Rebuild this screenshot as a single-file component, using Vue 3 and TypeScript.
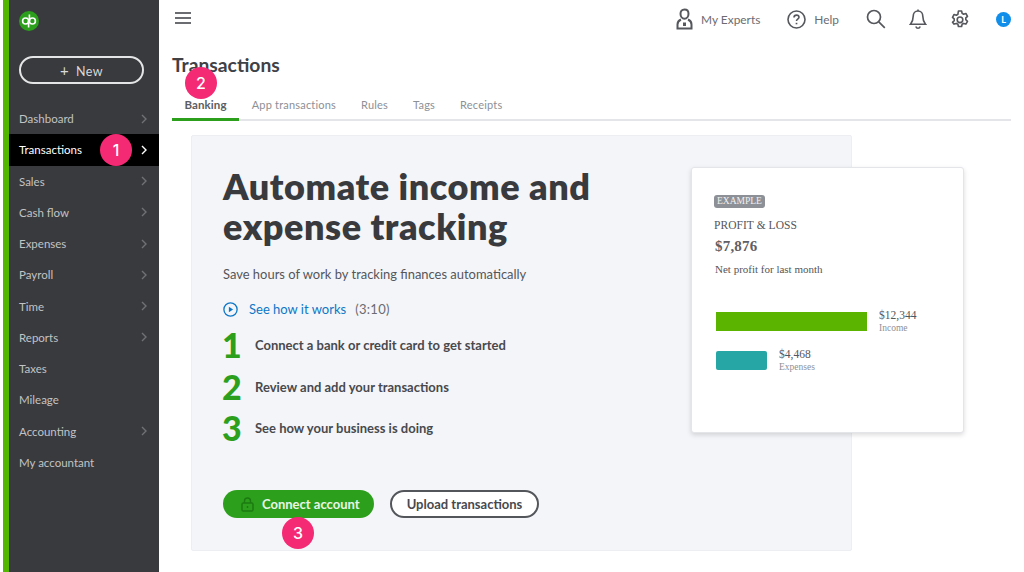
<script setup lang="ts">
const navItems = [
  { label: 'Dashboard', arrow: true },
  { label: 'Transactions', arrow: true, active: true },
  { label: 'Sales', arrow: true },
  { label: 'Cash flow', arrow: true },
  { label: 'Expenses', arrow: true },
  { label: 'Payroll', arrow: true },
  { label: 'Time', arrow: true },
  { label: 'Reports', arrow: true },
  { label: 'Taxes', arrow: false },
  { label: 'Mileage', arrow: false },
  { label: 'Accounting', arrow: true },
  { label: 'My accountant', arrow: false },
]

const tabs = ['Banking', 'App transactions', 'Rules', 'Tags', 'Receipts']

const steps = [
  { n: 1, text: 'Connect a bank or credit card to get started' },
  { n: 2, text: 'Review and add your transactions' },
  { n: 3, text: 'See how your business is doing' },
]
</script>

<template>
  <div class="page">
    <aside class="sidebar">
      <div class="logo">
        <svg width="20" height="20" viewBox="0 0 20 20">
          <circle cx="10" cy="10" r="10" fill="#2ca01c" />
          <circle cx="6.600" cy="10" r="3" fill="none" stroke="#fff" stroke-width="1.600" />
          <circle cx="13.400" cy="10" r="3" fill="none" stroke="#fff" stroke-width="1.600" />
          <path d="M9.600 10v6.500M10.400 10V3.500" stroke="#fff" stroke-width="1.600" fill="none" />
        </svg>
      </div>
      <button class="new-btn"><span class="plus">+</span>New</button>
      <nav class="nav">
        <div v-for="item in navItems" :key="item.label" class="nav-row" :class="{ active: item.active }">
          <span>{{ item.label }}</span>
          <svg v-if="item.arrow" class="chev" width="6" height="10" viewBox="0 0 6 10">
            <path d="M1 1l4 4-4 4" fill="none" stroke="currentColor" stroke-width="1.400" />
          </svg>
          <span v-if="item.active" class="badge badge-nav">1</span>
        </div>
      </nav>
    </aside>

    <main class="main">
      <header class="topbar">
        <div class="burger"><i></i><i></i><i></i></div>
        <div class="top-actions">
          <div class="top-link">
            <svg width="17" height="22" viewBox="0 0 17 22" fill="none" stroke="#55575c" stroke-width="2">
              <path d="M8.500 1.500c-2.600 0-4 1.800-4 4.200 0 2.600 1.600 5 4 5s4-2.400 4-5c0-2.400-1.400-4.200-4-4.200z" />
              <path d="M5 11.500c-2.300 1-3.500 2.500-3.500 5v4h14v-4c0-2.500-1.200-4-3.500-5" />
              <path d="M8.500 14.500v3.500" stroke-width="3" />
            </svg>
            <span>My Experts</span>
          </div>
          <div class="top-link help">
            <svg width="19" height="19" viewBox="0 0 19 19" fill="none" stroke="#55575c" stroke-width="1.600">
              <circle cx="9.500" cy="9.500" r="8.500" />
              <path d="M7 7.500c0-1.500 1.100-2.400 2.500-2.400s2.500.9 2.500 2.200c0 1.900-2.500 1.900-2.500 3.700" />
              <path d="M9.500 12.800v1.500" stroke-width="1.700" />
            </svg>
            <span>Help</span>
          </div>
          <svg class="ic-search" width="20" height="20" viewBox="0 0 20 20" fill="none" stroke="#55575c" stroke-width="1.700">
            <circle cx="8" cy="8" r="6.500" />
            <path d="M12.800 12.800l6 6" />
          </svg>
          <svg class="ic-bell" width="18" height="20" viewBox="0 0 18 20" fill="none" stroke="#55575c" stroke-width="1.600">
            <path d="M9 2c-3 0-4.800 2.200-4.800 5.200 0 3.800-.8 5.600-2.700 8h15c-1.900-2.400-2.700-4.200-2.700-8C13.800 4.200 12 2 9 2z" />
            <path d="M9 .5V2M6.800 17.500c.4 1.100 1.200 1.700 2.200 1.700s1.800-.6 2.200-1.700" />
          </svg>
          <svg class="ic-gear" width="18" height="18" viewBox="0 0 18 18" fill="none" stroke="#55575c" stroke-width="1.600">
            <path d="M7.400 1h3.200l.5 2.300 1.500.9 2.300-.7 1.600 2.800-1.700 1.600v1.800l1.700 1.600-1.600 2.800-2.300-.7-1.500.9-.5 2.200H7.400l-.5-2.200-1.500-.9-2.300.7L1.500 12.300l1.700-1.600V8.900L1.500 7.300l1.600-2.800 2.300.7 1.500-.9z" stroke-linejoin="round" />
            <circle cx="9" cy="9.800" r="2.800" />
          </svg>
          <span class="avatar">L</span>
        </div>
      </header>

      <h1 class="title">Transactions</h1>

      <div class="tabs">
        <div v-for="(tab, i) in tabs" :key="tab" class="tab" :class="{ on: i === 0 }">
          {{ tab }}
          <span v-if="i === 0" class="badge badge-tab">2</span>
        </div>
      </div>

      <section class="hero">
        <div class="hero-left">
          <h2 class="headline">Automate income and<br />expense tracking</h2>
          <p class="sub">Save hours of work by tracking finances automatically</p>
          <div class="video">
            <svg width="15" height="15" viewBox="0 0 15 15">
              <circle cx="7.500" cy="7.500" r="6.600" fill="none" stroke="#0d77c7" stroke-width="1.300" />
              <path d="M5.900 4.800l4.200 2.700-4.200 2.700z" fill="#0d77c7" />
            </svg>
            <a class="video-link">See how it works</a>
            <span class="video-time">(3:10)</span>
          </div>
          <ol class="steps">
            <li v-for="s in steps" :key="s.n" class="step">
              <span class="step-n">{{ s.n }}</span>
              <span class="step-text">{{ s.text }}</span>
            </li>
          </ol>
          <div class="actions">
            <button class="btn-green">
              <svg width="13" height="15" viewBox="0 0 13 15" fill="none" stroke="#1b7a10" stroke-width="1.500">
                <rect x="1" y="6" width="11" height="8" rx="1.200" />
                <path d="M3.500 6V4a3 3 0 016 0v2" />
                <path d="M6.500 9v2" />
              </svg>
              Connect account
              <span class="badge badge-btn">3</span>
            </button>
            <button class="btn-outline">Upload transactions</button>
          </div>
        </div>

        <div class="card">
          <span class="example">EXAMPLE</span>
          <div class="pl">PROFIT &amp; LOSS</div>
          <div class="amount">$7,876</div>
          <div class="net">Net profit for last month</div>
          <div class="bar-row first">
            <div class="bar income"></div>
            <div class="bar-label"><b>$12,344</b><small>Income</small></div>
          </div>
          <div class="bar-row">
            <div class="bar expenses"></div>
            <div class="bar-label"><b>$4,468</b><small>Expenses</small></div>
          </div>
        </div>
      </section>
    </main>
  </div>
</template>

<style>
html, body { margin: 0; background: #fff; }
</style>

<style scoped>
.page {
  width: 1024px; height: 572px; overflow: hidden;
  display: flex;
  font-family: "Lato", "Open Sans", sans-serif;
  color: #393a3d;
  background: #fff;
}
.sidebar {
  width: 150px; margin-left: 3px;
  flex-shrink: 0;
  border-left: 6px solid #53b700;
  background: #393a3d;
  box-sizing: content-box;
}
.logo { height: 20px; padding: 11px 0 0 10px; }
.logo svg { display: block; }
.new-btn {
  display: block;
  width: 125px; height: 28px;
  margin: 25px 0 0 10px;
  border: 2px solid #e4e5e6; border-radius: 14px;
  background: transparent;
  color: #d8d9da;
  font: 400 12.500px "Lato", sans-serif;
  letter-spacing: .4px;
  padding: 0;
}
.plus { margin-right: 7px; font-size: 15px; }
.nav { margin-top: 19px; }
.nav-row {
  position: relative;
  height: 31.250px;
  padding: 0 12px 0 10px;
  display: flex; align-items: center; justify-content: space-between;
  color: #c2c3c5;
  font-size: 11.500px;
}
.nav-row.active { background: #000; color: #fff; }
.chev { color: #6f7175; }
.active .chev { color: #fff; }

.badge {
  position: absolute;
  width: 32px; height: 32px; border-radius: 50%;
  background: #f42a74; color: #fff;
  display: flex; align-items: center; justify-content: center;
  font: 500 16px "Inter", "Lato", sans-serif;
}
.badge-nav { left: 91px; top: 0; }
.badge-tab { left: 13px; top: -25px; }
.badge-btn { left: 59px; top: 27px; }

.main { flex: 1; min-width: 0; padding-left: 13px; }
.topbar {
  height: 38px;
  display: flex; align-items: center; justify-content: space-between;
}
.burger { display: flex; flex-direction: column; gap: 3px; margin-left: 3px; margin-top: -2px; }
.burger i { display: block; width: 16px; height: 2px; background: #6b6c72; }
.top-actions { display: flex; align-items: center; }
.top-link { display: flex; align-items: center; font-size: 11.900px; color: #6b6c72; }
.top-link span { margin-left: 8px; }
.help { margin-left: 27px; }
.ic-search { margin-left: 27px; }
.ic-bell { margin-left: 23px; }
.ic-gear { margin-left: 24px; }
.avatar {
  width: 15px; height: 15px; border-radius: 50%;
  margin: 0 13px 0 27px;
  background: #108ee9; color: #fff;
  font-size: 9px; font-weight: 700;
  display: flex; align-items: center; justify-content: center;
}

.title {
  margin: 14px 0 0;
  font-size: 19.300px; line-height: 26px; font-weight: 700;
  color: #404145;
}
.tabs {
  display: flex;
  margin-top: 14px;
  margin-right: 13px;
  height: 27px;
  border-bottom: 2px solid #e3e5e8;
}
.tab {
  position: relative;
  padding: 0 12.500px;
  line-height: 26px;
  font-size: 11px;
  letter-spacing: .2px;
  color: #8d9096;
  height: 27px;
}
.tab.on {
  color: #5c5d61; font-weight: 700; font-size: 11.500px; letter-spacing: .1px;
  border-bottom: 3px solid #2ca01c;
  height: 26px;
}

.hero {
  position: relative;
  width: 661px; height: 416px;
  margin: 14px 0 0 19px;
  background: #f4f5f8;
  border: 1px solid #eceef1;
  border-radius: 2px;
  box-sizing: border-box;
  padding: 30px 0 0 31px;
  display: flex;
}
.hero-left { width: 468px; flex-shrink: 0; }
.headline {
  margin: 0;
  font-size: 36px; line-height: 40px; font-weight: 800;
  color: #393a3d;
  letter-spacing: .55px;
}
.sub { margin: 19px 0 0; font-size: 12.950px; line-height: 18px; color: #55565a; }
.video {
  margin-top: 17px;
  display: flex; align-items: center;
  font-size: 13px; line-height: 18px;
}
.video-link { margin-left: 11px; color: #0d77c7; }
.video-time { margin-left: 9px; color: #6b6c72; letter-spacing: .3px; }
.steps { list-style: none; margin: 6px 0 0; padding: 0; }
.step { height: 41.800px; display: flex; align-items: center; }
.step-n {
  width: 33px; margin-left: -1px;
  font-size: 34px; font-weight: 900; line-height: 40px;
  color: #2ca01c;
}
.step-text { font-size: 13px; font-weight: 700; color: #48494d; }
.actions { display: flex; margin-top: 41px; gap: 16px; }
.btn-green {
  position: relative;
  width: 151px; height: 28px;
  display: flex; align-items: center;
  padding: 0 0 0 18px;
  border: 0; border-radius: 14px;
  background: #2ca01c; color: #e8f5e6;
  font: 700 13px "Lato", sans-serif;
}
.btn-green svg { margin-right: 8px; }
.btn-outline {
  width: 149px; height: 28px;
  padding: 0;
  border: 2px solid #53565b; border-radius: 14px;
  background: #fff; color: #48494d;
  font: 700 13px "Lato", sans-serif;
}

.card {
  width: 273px; height: 266px;
  margin-top: 1px;
  margin-right: -112px;
  flex-shrink: 0;
  box-sizing: border-box;
  background: #fff;
  border: 1px solid #e3e5e8;
  border-radius: 3px;
  box-shadow: 0 2px 5px rgba(0,0,0,.14);
  padding: 22px 0 0 23px;
  font-family: "Liberation Serif", serif;
  color: #55565a;
}
.example {
  display: inline-block;
  margin-left: -1px;
  padding: 0 3px;
  background: #8d9096; color: #f0f0f0;
  border-radius: 3px;
  font-size: 9.500px; line-height: 13px;
}
.pl { margin: 10px 0 0 -1px; font-size: 11.500px; line-height: 15px; letter-spacing: .05px; }
.amount { margin-top: 3px; font-size: 15px; line-height: 20px; font-weight: 700; color: #5f6064; letter-spacing: .2px; }
.net { margin-top: 6px; font-size: 11px; line-height: 14px; }
.bar-row { display: flex; align-items: center; margin-top: 14px; margin-left: 1px; }
.bar-row.first { margin-top: 33px; }
.bar { height: 19px; }
.income { width: 151px; background: #5bb500; }
.expenses { width: 51px; background: #26a7a5; border-radius: 2px; }
.bar-label { margin-left: 12px; display: flex; flex-direction: column; }
.bar-label b { font-weight: 400; font-size: 11.500px; line-height: 13px; }
.bar-label small { font-size: 9.500px; line-height: 12px; color: #8d9096; }
</style>
